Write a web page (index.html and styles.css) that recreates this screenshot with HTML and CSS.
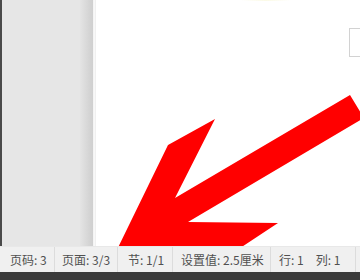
FILE: index.html
```html
<!DOCTYPE html>
<html lang="zh">
<head>
<meta charset="utf-8">
<link rel="stylesheet" href="styles.css">
</head>
<body>
<div class="app">
  <div class="workspace">
    <div class="edge"></div>
    <div class="canvas">
      <div class="shadow"></div>
    </div>
    <div class="page">
      <div class="glow"></div>
      <div class="box"></div>
    </div>
    <svg class="arrow" width="360" height="246" viewBox="0 0 360 246">
      <polygon fill="#ff0000" points="350,95 364,118 188,222 278,223 219,262 111,262 168,145 215,119 175,198"/>
    </svg>
  </div>
  <div class="status">
    <div class="cell c1">页码: 3</div>
    <div class="cell c2">页面: 3/3</div>
    <div class="cell c3">节: 1/1</div>
    <div class="cell c4">设置值: 2.5厘米</div>
    <div class="cell c5"><span>行: 1</span><span>列: 1</span></div>
  </div>
  <div class="taskbar"></div>
</div>
</body>
</html>
```

FILE: styles.css
```css
html, body {
  margin: 0;
  padding: 0;
  width: 360px;
  height: 280px;
  overflow: hidden;
  font-family: "Noto Sans CJK SC", "Liberation Sans", sans-serif;
}
.app {
  display: flex;
  flex-direction: column;
  width: 360px;
  height: 280px;
}
.workspace {
  position: relative;
  display: flex;
  height: 246px;
  overflow: hidden;
}
.edge {
  width: 2px;
  background: #4a4a4a;
}
.canvas {
  width: 93px;
  background: #e6e6e6;
  display: flex;
  justify-content: flex-end;
}
.shadow {
  width: 15px;
  background: linear-gradient(to right, #e4e4e4, #d2d2d2 70%, #cfcfcf 86%, #f4f4f4 90%, #fafafa);
}
.page {
  flex: 1;
  background: #ffffff;
  border-left: 1px solid #f0f0f0;
  position: relative;
}
.glow {
  position: absolute;
  left: 145px;
  top: 0;
  width: 50px;
  height: 1px;
  background: linear-gradient(to right, rgba(252,251,235,0), #fbfae6 50%, rgba(252,251,235,0));
}
.box {
  position: absolute;
  left: 253px;
  top: 28px;
  width: 20px;
  height: 27px;
  border: 1px solid #d2d2d2;
}
.arrow {
  position: absolute;
  left: 0;
  top: 0;
}
.status {
  height: 26px;
  background: #f0f0f0;
  display: flex;
  align-items: stretch;
  font-size: 12px;
  color: #505050;
  line-height: 26px;
  border-top: 1px solid #e8e8e8;
  box-sizing: border-box;
  position: relative;
  z-index: 1;
}
.cell {
  border-right: 1px solid #dcdcdc;
  box-sizing: border-box;
  white-space: nowrap;
  padding-left: 8px;
}
.c1 { width: 55px; padding-left: 10px; }
.c2 { width: 63px; padding-left: 7px; }
.c3 { width: 55px; padding-left: 10px; }
.c4 { width: 98px; padding-left: 8px; }
.c5 { width: 85px; padding-left: 8px; display: flex; gap: 12px; }
.taskbar {
  flex: 1;
  background: #3b3b3b;
}
```
